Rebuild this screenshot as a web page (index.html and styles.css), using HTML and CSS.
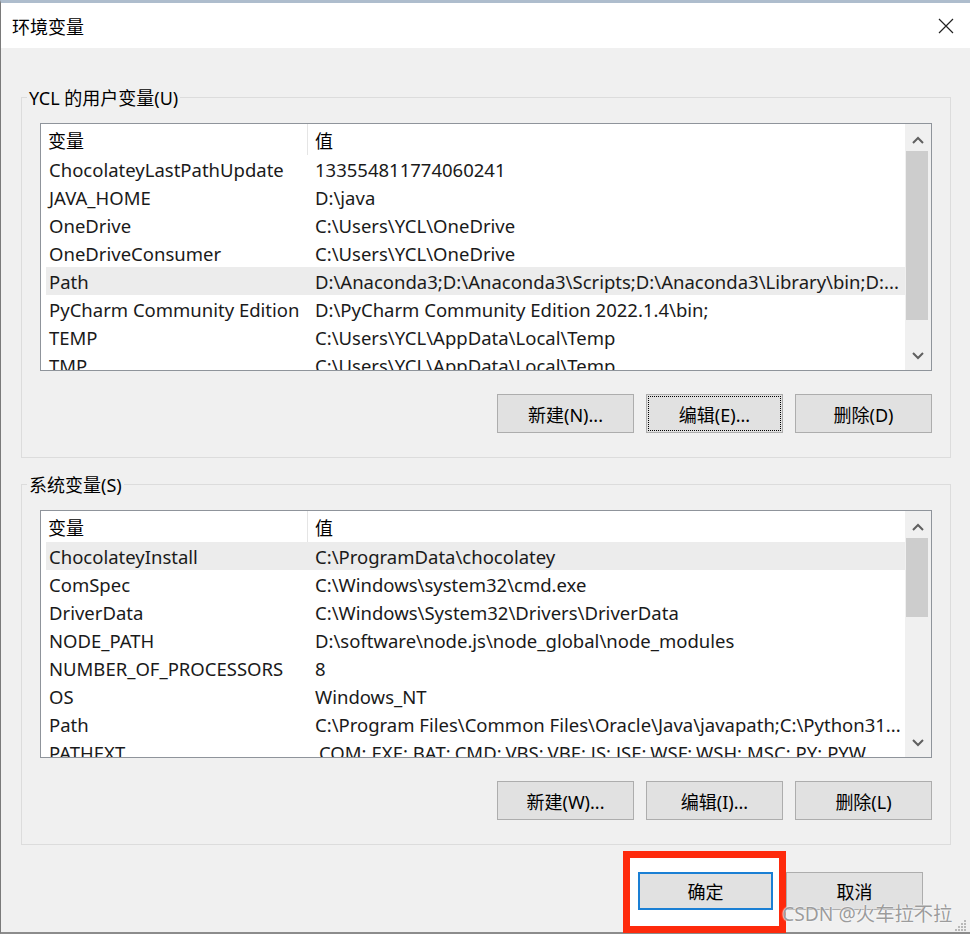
FILE: index.html
```html
<!DOCTYPE html>
<html lang="zh-CN">
<head>
<meta charset="utf-8">
<title>环境变量</title>
<link rel="stylesheet" href="styles.css">
</head>
<body>
<div class="window">
  <div class="titlebar">
    <span class="title">环境变量</span>
    <svg class="close" width="16" height="16" viewBox="0 0 16 16"><path d="M1 1 L15 15 M15 1 L1 15" stroke="#222" stroke-width="1.2" fill="none"/></svg>
  </div>
  <div class="content">
    <section class="group">
      <div class="group-title">YCL 的用户变量(U)</div>
      <div class="list">
        <div class="list-main">
          <div class="lv-head"><div class="c1">变量</div><div class="c2">值</div></div>
          <div class="row"><div class="c1">ChocolateyLastPathUpdate</div><div class="c2">133554811774060241</div></div>
          <div class="row"><div class="c1">JAVA_HOME</div><div class="c2">D:\java</div></div>
          <div class="row"><div class="c1">OneDrive</div><div class="c2">C:\Users\YCL\OneDrive</div></div>
          <div class="row"><div class="c1">OneDriveConsumer</div><div class="c2">C:\Users\YCL\OneDrive</div></div>
          <div class="row sel"><div class="c1">Path</div><div class="c2">D:\Anaconda3;D:\Anaconda3\Scripts;D:\Anaconda3\Library\bin;D:...</div></div>
          <div class="row"><div class="c1">PyCharm Community Edition</div><div class="c2">D:\PyCharm Community Edition 2022.1.4\bin;</div></div>
          <div class="row"><div class="c1">TEMP</div><div class="c2">C:\Users\YCL\AppData\Local\Temp</div></div>
          <div class="row"><div class="c1">TMP</div><div class="c2">C:\Users\YCL\AppData\Local\Temp</div></div>
        </div>
        <div class="sb">
          <div class="sb-btn up"><svg width="12" height="8" viewBox="0 0 12 8"><path d="M1 7 L6 2 L11 7" stroke="#606060" stroke-width="2" fill="none"/></svg></div>
          <div class="sb-track"><div class="sb-thumb t1"></div></div>
          <div class="sb-btn down"><svg width="12" height="8" viewBox="0 0 12 8"><path d="M1 1 L6 6 L11 1" stroke="#606060" stroke-width="2" fill="none"/></svg></div>
        </div>
      </div>
      <div class="buttons">
        <button class="btn">新建(N)...</button>
        <button class="btn focus">编辑(E)...</button>
        <button class="btn">删除(D)</button>
      </div>
    </section>

    <section class="group">
      <div class="group-title">系统变量(S)</div>
      <div class="list">
        <div class="list-main">
          <div class="lv-head"><div class="c1">变量</div><div class="c2">值</div></div>
          <div class="row sel"><div class="c1">ChocolateyInstall</div><div class="c2">C:\ProgramData\chocolatey</div></div>
          <div class="row"><div class="c1">ComSpec</div><div class="c2">C:\Windows\system32\cmd.exe</div></div>
          <div class="row"><div class="c1">DriverData</div><div class="c2">C:\Windows\System32\Drivers\DriverData</div></div>
          <div class="row"><div class="c1">NODE_PATH</div><div class="c2">D:\software\node.js\node_global\node_modules</div></div>
          <div class="row"><div class="c1">NUMBER_OF_PROCESSORS</div><div class="c2">8</div></div>
          <div class="row"><div class="c1">OS</div><div class="c2">Windows_NT</div></div>
          <div class="row"><div class="c1">Path</div><div class="c2">C:\Program Files\Common Files\Oracle\Java\javapath;C:\Python31...</div></div>
          <div class="row"><div class="c1">PATHEXT</div><div class="c2">.COM;.EXE;.BAT;.CMD;.VBS;.VBE;.JS;.JSE;.WSF;.WSH;.MSC;.PY;.PYW</div></div>
        </div>
        <div class="sb">
          <div class="sb-btn up"><svg width="12" height="8" viewBox="0 0 12 8"><path d="M1 7 L6 2 L11 7" stroke="#606060" stroke-width="2" fill="none"/></svg></div>
          <div class="sb-track"><div class="sb-thumb t2"></div></div>
          <div class="sb-btn down"><svg width="12" height="8" viewBox="0 0 12 8"><path d="M1 1 L6 6 L11 1" stroke="#606060" stroke-width="2" fill="none"/></svg></div>
        </div>
      </div>
      <div class="buttons">
        <button class="btn">新建(W)...</button>
        <button class="btn">编辑(I)...</button>
        <button class="btn">删除(L)</button>
      </div>
    </section>

    <div class="footer">
      <div class="mark"><button class="btn ok">确定</button></div>
      <button class="btn cancel">取消</button>
    </div>
  </div>
  <div class="watermark">CSDN @火车拉不拉</div>
  <svg class="grip" width="12" height="12" viewBox="0 0 12 12" fill="#b8b8b8">
    <rect x="9" y="1" width="2" height="2"/><rect x="6" y="4" width="2" height="2"/><rect x="9" y="4" width="2" height="2"/>
    <rect x="3" y="7" width="2" height="2"/><rect x="6" y="7" width="2" height="2"/><rect x="9" y="7" width="2" height="2"/>
    <rect x="0" y="10" width="2" height="2"/><rect x="3" y="10" width="2" height="2"/><rect x="6" y="10" width="2" height="2"/><rect x="9" y="10" width="2" height="2"/>
  </svg>
</div>
</body>
</html>
```
FILE: styles.css
```css
* { box-sizing: border-box; }

body {
  margin: 0;
  background: #f0f0f0;
  font-family: "Noto Sans", "Noto Sans CJK SC", sans-serif;
  font-size: 18px;
  color: #000;
}

.window {
  position: relative;
  width: 970px;
  height: 934px;
  background: #f0f0f0;
  border-left: 1px solid #7a7a7a;
  border-top: 3px solid #aebdcd;
  border-bottom: 2px solid #8c8c8c;
}

.titlebar {
  height: 45px;
  background: #fff;
  display: flex;
  align-items: center;
  justify-content: space-between;
  padding: 0 16px 0 11px;
}

.title { color: #000; }

.content {
  padding: 0 19px 0 20px;
}

.group {
  border: 1px solid #dcdcdc;
  padding: 0 18px 24px 18px;
  margin-top: 49px;
}

.group + .group { margin-top: 26px; }

.group-title {
  width: fit-content;
  height: 26px;
  line-height: 26px;
  margin: -13px 0 0 -13px;
  padding: 0 2px;
  background: #f0f0f0;
}

.list {
  margin-top: 12px;
  height: 248px;
  border: 1px solid #8f949b;
  background: #fff;
  display: flex;
  overflow: hidden;
}

.list-main {
  flex: 1;
  min-width: 0;
  overflow: hidden;
}

.lv-head {
  display: flex;
  height: 31px;
  align-items: center;
  white-space: nowrap;
}

.lv-head .c1 {
  width: 267px;
  height: 100%;
  display: flex;
  align-items: center;
  padding-left: 7px;
  border-right: 1px solid #e5e5e5;
}

.lv-head .c2 { padding-left: 7px; }

.row {
  display: flex;
  height: 28px;
  align-items: center;
  margin-left: 5px;
  white-space: nowrap;
  color: #1a1a1a;
  font-size: 18.5px;
}

.row.sel { background: #ececec; }

.row .c1 {
  flex: none;
  width: 261px;
  padding-left: 3px;
}

.row .c2 { padding-left: 8px; }

.sb {
  flex: none;
  width: 26px;
  background: #f0f0f0;
  display: flex;
  flex-direction: column;
}

.sb-btn {
  flex: none;
  height: 27px;
  display: flex;
  justify-content: center;
  align-items: center;
}

.sb-btn.up { padding-top: 5px; }
.sb-btn.down { padding-bottom: 1px; }

.sb-track { flex: 1; }

.sb-thumb {
  margin: 0 3px 0 1px;
  background: #cdcdcd;
}

.t1 { height: 169px; }
.t2 { height: 79px; }

.buttons {
  display: flex;
  justify-content: flex-end;
  gap: 12px;
  margin-top: 23px;
}

.btn {
  width: 137px;
  height: 39px;
  padding: 0;
  background: #e1e1e1;
  border: 1px solid #adadad;
  font: inherit;
  color: #000;
  display: flex;
  align-items: center;
  justify-content: center;
}

.btn.focus {
  outline: 1px dotted #000;
  outline-offset: -3px;
}

.footer {
  display: flex;
  justify-content: flex-end;
  align-items: flex-start;
  margin-top: 6px;
  padding-right: 28px;
}

.mark {
  height: 82px;
  border: 7px solid #fe2a0c;
  background: #fff;
  padding: 14px 6px 0 8px;
}

.btn.ok {
  width: 135px;
  height: 38px;
  border: 2px solid #1a7fd4;
}

.btn.cancel {
  height: 38px;
  margin-top: 21px;
}

.watermark {
  position: absolute;
  left: 781px;
  top: 899px;
  font-size: 19.3px;
  line-height: 24px;
  color: #9c9c9c;
  text-shadow: 0 0 2px #fff, 0 0 1px #fff;
  white-space: nowrap;
}

.grip {
  position: absolute;
  right: 3px;
  bottom: 1px;
}
```
